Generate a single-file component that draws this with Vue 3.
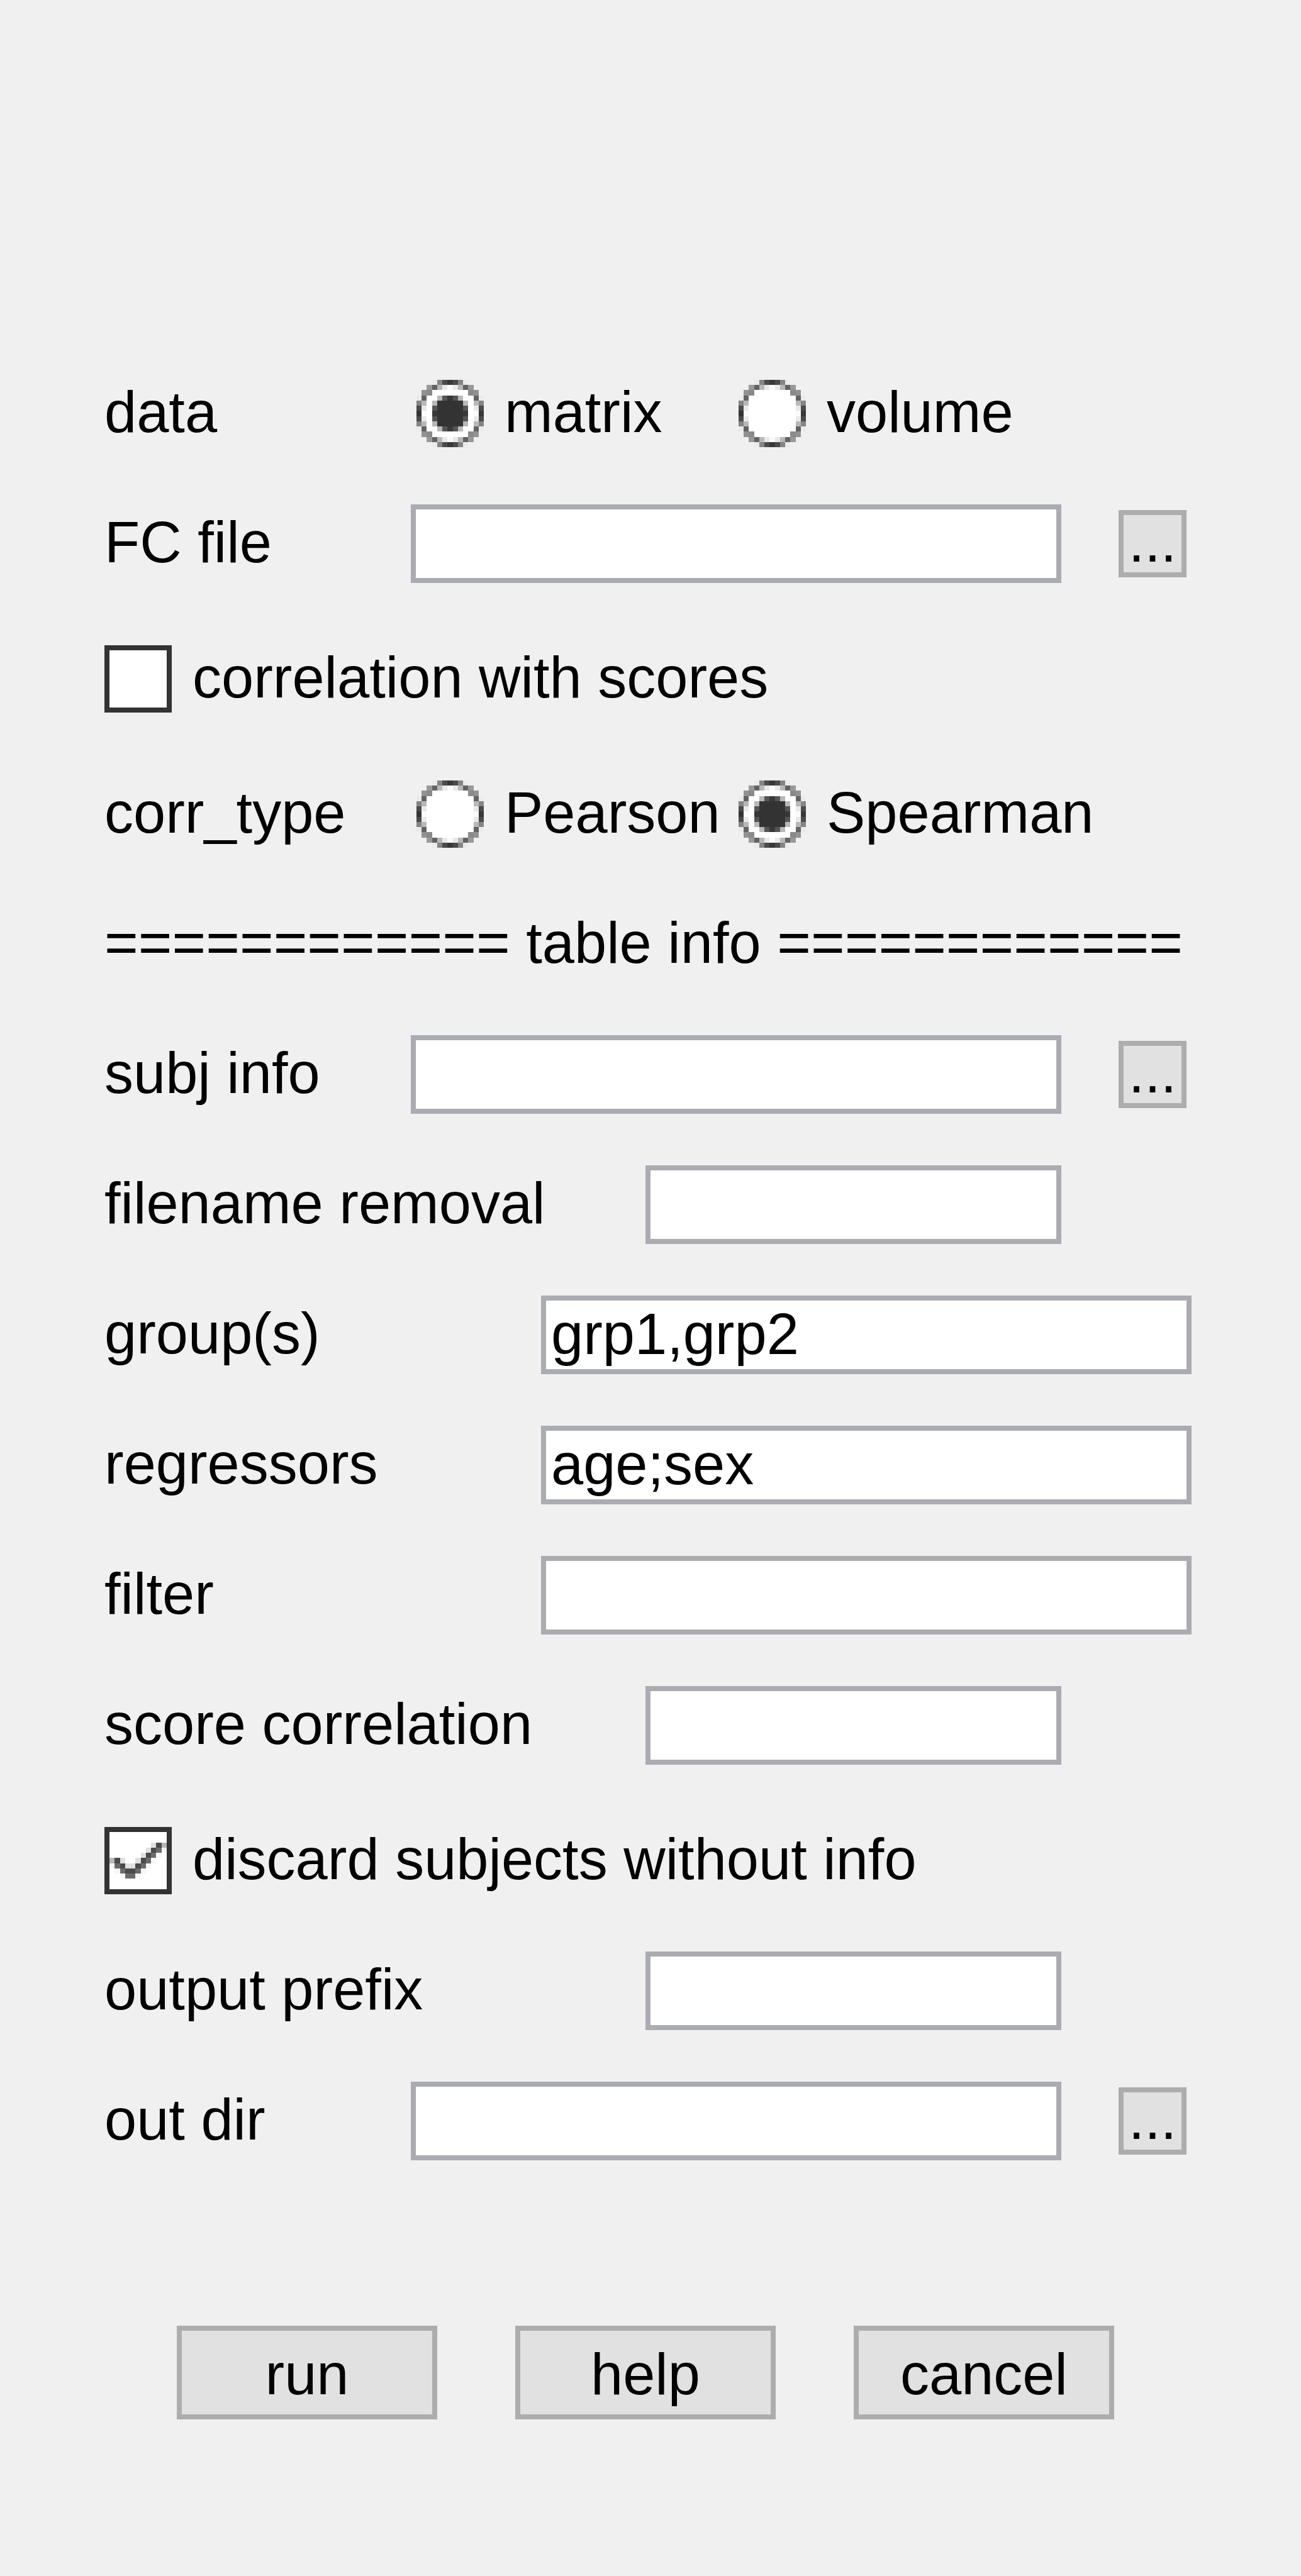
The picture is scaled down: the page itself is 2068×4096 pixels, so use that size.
<script setup>
import { reactive } from 'vue'

const form = reactive({
  data: 'matrix',
  corrType: 'Spearman',
  withScores: false,
  discard: true,
  fcFile: '',
  subjInfo: '',
  filenameRemoval: '',
  groups: 'grp1,grp2',
  regressors: 'age;sex',
  filter: '',
  scoreCorrelation: '',
  outputPrefix: '',
  outDir: '',
})

const tableFields = [
  { key: 'subjInfo', label: 'subj info', kind: 'file' },
  { key: 'filenameRemoval', label: 'filename removal', kind: 'short' },
  { key: 'groups', label: 'group(s)', kind: 'wide' },
  { key: 'regressors', label: 'regressors', kind: 'wide' },
  { key: 'filter', label: 'filter', kind: 'wide' },
  { key: 'scoreCorrelation', label: 'score correlation', kind: 'short' },
]
const outputFields = [
  { key: 'outputPrefix', label: 'output prefix', kind: 'short' },
  { key: 'outDir', label: 'out dir', kind: 'file' },
]

// One letter per pixel of the 13 x 13 radio glyph
const shades = {
  a: '#ebebeb', b: '#858585', c: '#4b4b4b', d: '#383838', e: '#999999',
  f: '#636363', g: '#b8b8b8', h: '#e9e9e9', i: '#fafafa', j: '#929292',
  k: '#8a8a8a', w: '#ffffff', x: '#333333', m: '#555555',
  n: '#e0e0e0', o: '#6b6b6b', p: '#f6f6f6',
}
const mirror = (rows) => [...rows, ...rows.slice(0, -1).reverse()]
const ringRows = mirror([
  '...abcdcba...',
  '..efghihgfe..',
  '.jkwwwwwwwkj.',
  'afwwwwwwwwwfa',
  'bgwwwwwwwwwgb',
  'chwwwwwwwwwhc',
  'xiwwwwwwwwwid',
])
const dotRows = mirror([
  '.............',
  '.............',
  '.............',
  '....gmdmg....',
  '...gxxxxxg...',
  '...mxxxxxm...',
  '...dxxxxxd...',
])
const checkRows = [
  '...........',
  '...........',
  '........ncg',
  '.......ncop',
  '......ncop.',
  'gcn..ncop..',
  'pocnncop...',
  '.poccop....',
  '..poop.....',
]
const pixels = (rows) =>
  rows.flatMap((row, y) =>
    [...row].map((ch, x) => ({ x, y, fill: shades[ch] })).filter((p) => p.fill)
  )
const ring = pixels(ringRows)
const dot = pixels(dotRows)
const tick = pixels(checkRows)

const radioGroups = {
  data: ['matrix', 'volume'],
  corrType: ['Pearson', 'Spearman'],
}
</script>

<template>
  <form class="page" @submit.prevent>
    <div class="row radios" role="radiogroup" aria-labelledby="data-label">
      <span id="data-label" class="text">data</span>
      <label v-for="name in radioGroups.data" :key="name" class="option">
        <span class="mark">
          <input v-model="form.data" type="radio" name="data" :value="name" />
          <svg viewBox="0 0 13 13" shape-rendering="crispEdges" aria-hidden="true">
            <rect v-for="(p, i) in ring" :key="i" :x="p.x" :y="p.y" width="1" height="1" :fill="p.fill" />
            <g v-if="form.data === name">
              <rect v-for="(p, i) in dot" :key="i" :x="p.x" :y="p.y" width="1" height="1" :fill="p.fill" />
            </g>
          </svg>
        </span>
        <span class="text">{{ name }}</span>
      </label>
    </div>

    <div class="row file">
      <label class="text" for="fcFile">FC file</label>
      <input id="fcFile" v-model="form.fcFile" class="field" type="text" />
      <button class="browse" type="button" aria-label="browse FC file">...</button>
    </div>

    <div class="row check spaced">
      <label class="option">
        <span class="mark">
          <input v-model="form.withScores" type="checkbox" />
          <svg v-if="form.withScores" class="tick" viewBox="0 0 11 11" shape-rendering="crispEdges" aria-hidden="true">
            <rect v-for="(p, i) in tick" :key="i" :x="p.x" :y="p.y" width="1" height="1" :fill="p.fill" />
          </svg>
        </span>
        <span class="text">correlation with scores</span>
      </label>
    </div>

    <div class="row radios spaced" role="radiogroup" aria-labelledby="corr-label">
      <span id="corr-label" class="text">corr_type</span>
      <label v-for="name in radioGroups.corrType" :key="name" class="option">
        <span class="mark">
          <input v-model="form.corrType" type="radio" name="corrType" :value="name" />
          <svg viewBox="0 0 13 13" shape-rendering="crispEdges" aria-hidden="true">
            <rect v-for="(p, i) in ring" :key="i" :x="p.x" :y="p.y" width="1" height="1" :fill="p.fill" />
            <g v-if="form.corrType === name">
              <rect v-for="(p, i) in dot" :key="i" :x="p.x" :y="p.y" width="1" height="1" :fill="p.fill" />
            </g>
          </svg>
        </span>
        <span class="text">{{ name }}</span>
      </label>
    </div>

    <h2 class="row heading text">============ table info ============</h2>

    <div v-for="f in tableFields" :key="f.key" class="row" :class="f.kind">
      <label class="text" :for="f.key">{{ f.label }}</label>
      <input :id="f.key" v-model="form[f.key]" class="field" type="text" />
      <button v-if="f.kind === 'file'" class="browse" type="button" :aria-label="'browse ' + f.label">...</button>
    </div>

    <div class="row check spaced">
      <label class="option">
        <span class="mark">
          <input v-model="form.discard" type="checkbox" />
          <svg v-if="form.discard" class="tick" viewBox="0 0 11 11" shape-rendering="crispEdges" aria-hidden="true">
            <rect v-for="(p, i) in tick" :key="i" :x="p.x" :y="p.y" width="1" height="1" :fill="p.fill" />
          </svg>
        </span>
        <span class="text">discard subjects without info</span>
      </label>
    </div>

    <div v-for="f in outputFields" :key="f.key" class="row" :class="f.kind">
      <label class="text" :for="f.key">{{ f.label }}</label>
      <input :id="f.key" v-model="form[f.key]" class="field" type="text" />
      <button v-if="f.kind === 'file'" class="browse" type="button" :aria-label="'browse ' + f.label">...</button>
    </div>

    <div class="actions">
      <button type="submit">run</button>
      <button type="button">help</button>
      <button type="button">cancel</button>
    </div>
  </form>
</template>

<style>
body {
  background: #f0f0f0;
}
</style>

<style scoped>
.page {
  box-sizing: border-box;
  min-height: 100vh;
  padding: 554px 174px 249px 166px;
  background: #f0f0f0;
  color: #000;
  font: 92px/106px "Liberation Sans", Arial, sans-serif;
}
.row {
  display: grid;
  align-items: center;
  height: 207px;
}
.spaced {
  margin-top: 8px;
}
.text {
  padding-bottom: 6px;
  white-space: nowrap;
}
.heading {
  box-sizing: border-box;
  margin: 0;
  font: inherit;
}
.radios {
  grid-template-columns: 496px 512px 1fr;
}
.file {
  grid-template-columns: 487px 1fr 199px;
  padding-right: 8px;
}
.short {
  grid-template-columns: 860px 1fr;
  padding-right: 207px;
}
.wide {
  grid-template-columns: 694px 1fr;
}
.field {
  box-sizing: border-box;
  width: 100%;
  min-width: 0;
  height: 125px;
  margin: 0;
  padding: 0 8px 3px;
  border: 8px solid #abacb2;
  border-radius: 0;
  outline: none;
  background: #fff;
  color: inherit;
  font: inherit;
}
.option {
  display: flex;
  align-items: center;
  gap: 33px;
}
.mark {
  position: relative;
  flex: none;
  width: 107px;
  height: 107px;
}
.mark input {
  appearance: none;
  display: block;
  box-sizing: border-box;
  width: 100%;
  height: 100%;
  margin: 0;
}
.mark input[type="checkbox"] {
  border: 8px solid #333;
  background: #fff;
}
.mark svg {
  position: absolute;
  inset: 0;
  width: 100%;
  height: 100%;
  pointer-events: none;
}
.mark .tick {
  inset: 8px;
  width: 91px;
  height: 91px;
}
button {
  box-sizing: border-box;
  margin: 0;
  padding: 0;
  border: 8px solid #adadad;
  border-radius: 0;
  background: #e1e1e1;
  color: inherit;
  font: inherit;
}
.browse {
  justify-self: end;
  width: 108px;
  height: 107px;
  padding-bottom: 6px;
  line-height: 85px;
}
.actions {
  display: flex;
  gap: 124px;
  margin-top: 222px;
  padding-left: 115px;
}
.actions button {
  width: 414px;
  height: 149px;
  padding-top: 4px;
}
</style>
